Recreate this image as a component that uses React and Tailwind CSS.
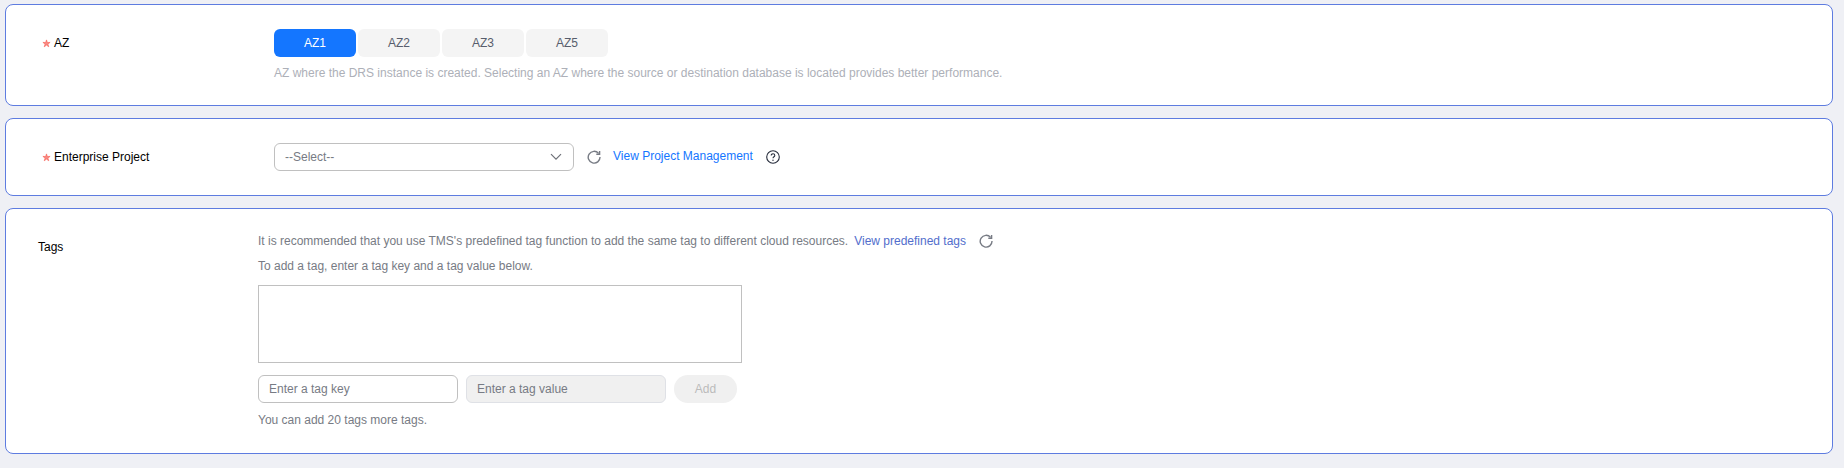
import { useState } from "react";

const zones = ["AZ1", "AZ2", "AZ3", "AZ5"];

const Star = () => (
  <svg width="9" height="9" viewBox="0 0 10 10" className="mr-[3px] shrink-0">
    <path
      d="M5 1 5.9 3.9 9 3.8 6.5 5.6 7.5 8.6 5 6.8 2.5 8.6 3.5 5.6 1 3.8 4.1 3.9z"
      fill="#f98a84"
      stroke="#f6685f"
      strokeWidth=".8"
    />
  </svg>
);

const Refresh = ({ size = 14, className = "" }) => (
  <svg width={size} height={size} viewBox="0 0 14 14" fill="none" className={className}>
    <path d="M11.6 3.4A5.9 5.9 0 1 0 13 7" stroke="#777b84" strokeWidth="1.4" />
    <path d="M12.6 1v3.3H9.3" fill="none" stroke="#777b84" strokeWidth="1.4" />
  </svg>
);

const Label = ({ children }) => (
  <div className="flex items-center w-[268px] pl-[36px] text-black">
    <Star />
    <span>{children}</span>
  </div>
);

export default function App() {
  const [activeZone, setActiveZone] = useState("AZ1");

  return (
    <div className="min-h-[468px] bg-[#eff0f5] pt-[4px] pl-[5px] pr-[11px] font-['Liberation_Sans',Arial,sans-serif] text-[12px] leading-[18px]">
      <div className="flex flex-col gap-[12px]">
        {/* AZ */}
        <div className="h-[102px] bg-white border border-[#5e7ce0] rounded-[8px] pt-[24px] flex items-start">
          <div className="h-[28px] flex items-center">
            <Label>AZ</Label>
          </div>
          <div>
            <div className="flex gap-[2px]">
              {zones.map((zone) => (
                <button
                  key={zone}
                  onClick={() => setActiveZone(zone)}
                  className={`w-[82px] h-[28px] rounded-[6px] ${
                    activeZone === zone
                      ? "bg-[#1476ff] text-white"
                      : "bg-[#f4f4f4] text-[#575d6c]"
                  }`}
                >
                  {zone}
                </button>
              ))}
            </div>
            <p className="mt-[7px] text-[#adb0b8]">
              AZ where the DRS instance is created. Selecting an AZ where the source or destination database is located provides better performance.
            </p>
          </div>
        </div>

        {/* Enterprise Project */}
        <div className="h-[78px] bg-white border border-[#5e7ce0] rounded-[8px] pt-[24px]">
          <div className="flex items-center h-[28px]">
            <Label>Enterprise Project</Label>
            <div className="w-[300px] h-[28px] border border-[#c0c0c0] rounded-[6px] flex items-center justify-between pl-[10px] pr-[11px] text-[#777b84]">
              <span>--Select--</span>
              <svg width="12" height="8" viewBox="0 0 12 8" fill="none">
                <path d="M1 1.2 6 6.2l5-5" stroke="#6e7178" strokeWidth="1.2" />
              </svg>
            </div>
            <Refresh className="ml-[13px]" />
            <a className="ml-[12px] mb-[2px] text-[#1476ff]">View Project Management</a>
            <svg width="14" height="14" viewBox="0 0 14 14" fill="none" className="ml-[13px]">
              <circle cx="7" cy="7" r="6.3" stroke="#252b3a" strokeWidth="1.1" />
              <path
                d="M5.2 5.5c0-1 .8-1.7 1.8-1.7s1.8.7 1.8 1.6c0 1.3-1.8 1.4-1.8 2.8"
                stroke="#252b3a"
                strokeWidth="1.1"
              />
              <circle cx="7" cy="10.2" r=".7" fill="#252b3a" />
            </svg>
          </div>
        </div>

        {/* Tags */}
        <div className="h-[246px] bg-white border border-[#5e7ce0] rounded-[8px] pt-[23px] pl-[32px] flex">
          <div className="w-[220px] pt-[6px] text-black">Tags</div>
          <div className="text-[#777b84]">
            <div className="flex items-center">
              <span>It is recommended that you use TMS's predefined tag function to add the same tag to different cloud resources.</span>
              <a className="ml-[6px] text-[#526ecc]">View predefined tags</a>
              <Refresh className="ml-[13px]" />
            </div>
            <p className="mt-[7px]">To add a tag, enter a tag key and a tag value below.</p>
            <div className="mt-[10px] w-[484px] h-[78px] border border-[#c0c0c0]" />
            <div className="mt-[12px] flex gap-[8px]">
              <input
                placeholder="Enter a tag key"
                className="w-[200px] h-[28px] border border-[#c0c0c0] rounded-[6px] px-[10px] outline-none placeholder:text-[#777b84]"
              />
              <input
                disabled
                placeholder="Enter a tag value"
                className="w-[200px] h-[28px] bg-[#f0f0f0] border border-[#dfe1e6] rounded-[6px] px-[10px] placeholder:text-[#777b84]"
              />
              <button disabled className="w-[63px] h-[28px] bg-[#f0f0f0] rounded-full text-[#bbbbbb]">
                Add
              </button>
            </div>
            <p className="mt-[8px]">You can add 20 tags more tags.</p>
          </div>
        </div>
      </div>
    </div>
  );
}
